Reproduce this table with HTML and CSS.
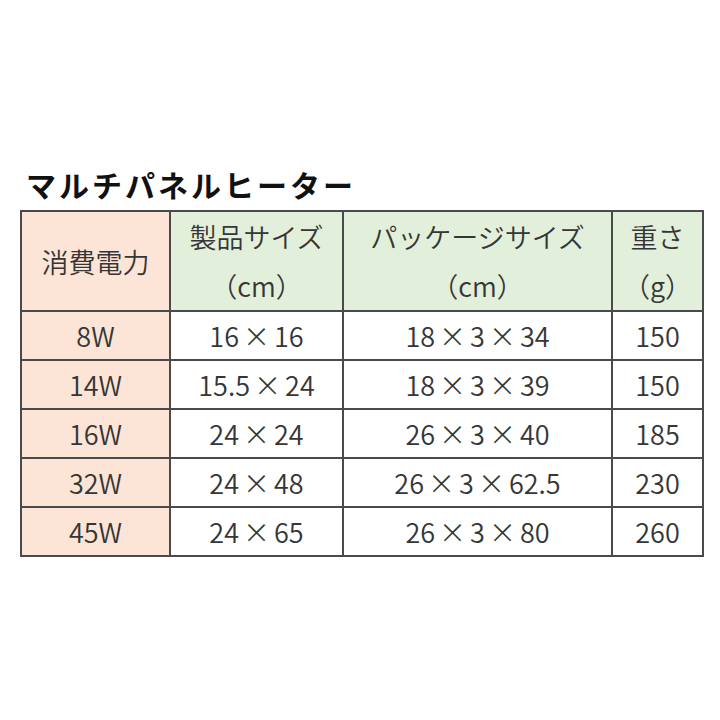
FILE: index.html
```html
<!DOCTYPE html>
<html lang="ja">
<head>
<meta charset="utf-8">
<title>マルチパネルヒーター</title>
<link rel="stylesheet" href="styles.css">
</head>
<body>
<div class="page">
  <h1 class="title">マルチパネルヒーター</h1>
  <table class="spec">
    <colgroup>
      <col class="c1"><col class="c2"><col class="c3"><col class="c4">
    </colgroup>
    <thead>
      <tr>
        <th class="watt">消費電力</th>
        <th class="head">製品サイズ<br>（cm）</th>
        <th class="head">パッケージサイズ<br>（cm）</th>
        <th class="head">重さ<br>（g）</th>
      </tr>
    </thead>
    <tbody>
      <tr><td class="watt">8W</td><td>16 × 16</td><td>18 × 3 × 34</td><td>150</td></tr>
      <tr><td class="watt">14W</td><td>15.5 × 24</td><td>18 × 3 × 39</td><td>150</td></tr>
      <tr><td class="watt">16W</td><td>24 × 24</td><td>26 × 3 × 40</td><td>185</td></tr>
      <tr><td class="watt">32W</td><td>24 × 48</td><td>26 × 3 × 62.5</td><td>230</td></tr>
      <tr><td class="watt">45W</td><td>24 × 65</td><td>26 × 3 × 80</td><td>260</td></tr>
    </tbody>
  </table>
</div>
</body>
</html>
```
FILE: styles.css
```css
html, body {
  margin: 0;
  padding: 0;
  background: #ffffff;
}
body {
  width: 720px;
  height: 720px;
  font-family: "Noto Sans CJK JP", "Noto Sans", sans-serif;
  color: #3c3c3c;
}
.page {
  padding: 164px 0 0 20px;
}
.title {
  margin: 0 0 6px 6px;
  font-size: 30px;
  line-height: 40px;
  font-weight: 700;
  color: #111111;
  letter-spacing: 3px;
}
.spec {
  border-collapse: collapse;
  width: 682px;
  table-layout: fixed;
}
.c1 { width: 149px; }
.c2 { width: 173px; }
.c3 { width: 269px; }
.c4 { width: 91px; }
.spec th, .spec td {
  border: 2px solid #4a4a4a;
  padding: 0;
  text-align: center;
  font-size: 27px;
  font-weight: 350;
  line-height: 47px;
  height: 47px;
  color: #363636;
  word-spacing: -2px;
}
.spec th {
  height: 98px;
  line-height: 49px;
}
.spec .watt {
  background: #fce4d6;
}
.spec .head {
  background: #e2efda;
}
```
